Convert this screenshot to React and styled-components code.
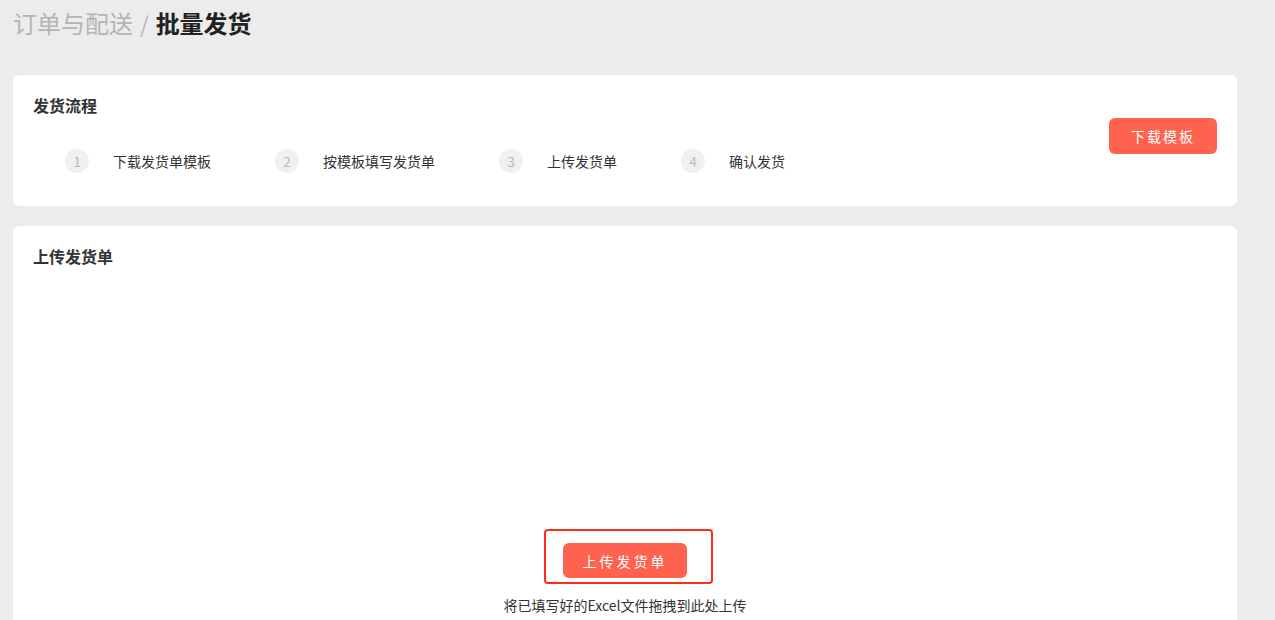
import React from "react";
import styled, { createGlobalStyle } from "styled-components";

const steps = ["下载发货单模板", "按模板填写发货单", "上传发货单", "确认发货"];

const App = () => {
  return (
    <>
      <GlobalStyle />
      <Page>
        <Breadcrumb>
          <Crumb>订单与配送</Crumb>
          <Sep>/</Sep>
          <Current>批量发货</Current>
        </Breadcrumb>

        <FlowCard>
          <FlowMain>
            <CardTitle>发货流程</CardTitle>
            <Steps>
              {steps.map((label, i) => (
                <Step key={label}>
                  <StepNum>{i + 1}</StepNum>
                  <StepLabel>{label}</StepLabel>
                </Step>
              ))}
            </Steps>
          </FlowMain>
          <PrimaryButton $top={23}>下载模板</PrimaryButton>
        </FlowCard>

        <UploadCard>
          <CardTitle>上传发货单</CardTitle>
          <DropArea>
            <Highlight>
              <PrimaryButton $wide>上传发货单</PrimaryButton>
            </Highlight>
            <Hint>将已填写好的Excel文件拖拽到此处上传</Hint>
          </DropArea>
        </UploadCard>
      </Page>
    </>
  );
};

const GlobalStyle = createGlobalStyle`
  html, body {
    margin: 0;
    padding: 0;
    background: #ececec;
    font-family: "Noto Sans CJK SC", "Noto Sans", sans-serif;
    overflow: hidden;
  }
`;

const Page = styled.div`
  padding: 0 38px 0 13px;
  height: 620px;
  box-sizing: border-box;
`;

const Breadcrumb = styled.div`
  display: flex;
  align-items: center;
  gap: 7px;
  height: 30px;
  padding: 8px 0 2px;
  font-size: 24px;
  line-height: 30px;
`;

const Crumb = styled.span`
  color: #b4b4b4;
`;

const Sep = styled.span`
  color: #b4b4b4;
  font-size: 22px;
`;

const Current = styled.span`
  color: #222;
  font-weight: 700;
`;

const Card = styled.div`
  background: #fff;
  border-radius: 6px;
  padding: 20px;
  box-sizing: border-box;
`;

const FlowCard = styled(Card)`
  margin-top: 35px;
  height: 131px;
  display: flex;
  justify-content: space-between;
  align-items: flex-start;
`;

const FlowMain = styled.div`
  display: flex;
  flex-direction: column;
`;

const CardTitle = styled.div`
  font-size: 16px;
  line-height: 20px;
  font-weight: 700;
  color: #333;
`;

const Steps = styled.div`
  display: flex;
  margin-top: 34px;
  padding-left: 32px;
  gap: 64px;
`;

const Step = styled.div`
  display: flex;
  align-items: center;
  gap: 24px;
`;

const StepNum = styled.span`
  width: 24px;
  height: 24px;
  border-radius: 50%;
  background: #f0f0f0;
  color: #b8b8b8;
  font-size: 13px;
  display: flex;
  align-items: center;
  justify-content: center;
`;

const StepLabel = styled.span`
  font-size: 14px;
  color: #333;
`;

const PrimaryButton = styled.button`
  margin-top: ${(p) => p.$top || 0}px;
  width: ${(p) => (p.$wide ? 124 : 108)}px;
  height: ${(p) => (p.$wide ? 35 : 36)}px;
  border: none;
  border-radius: 6px;
  background: #ff6350;
  color: #fff;
  font-family: inherit;
  font-size: 14px;
  letter-spacing: ${(p) => (p.$wide ? 3 : 2)}px;
  padding: 0;
  cursor: pointer;
`;

const UploadCard = styled(Card)`
  margin-top: 20px;
  height: 420px;
  border-radius: 6px 6px 0 0;
`;

const DropArea = styled.div`
  display: flex;
  flex-direction: column;
  align-items: center;
  margin-top: 277px;
`;

const Highlight = styled.div`
  position: relative;
  display: flex;

  &::after {
    content: "";
    position: absolute;
    top: -14px;
    left: -19px;
    right: -26px;
    bottom: -6px;
    border: 2px solid #ff2a1b;
    border-radius: 4px;
    pointer-events: none;
  }
`;

const Hint = styled.div`
  margin-top: 17px;
  font-size: 14px;
  line-height: 20px;
  color: #333;
`;

export default App;
